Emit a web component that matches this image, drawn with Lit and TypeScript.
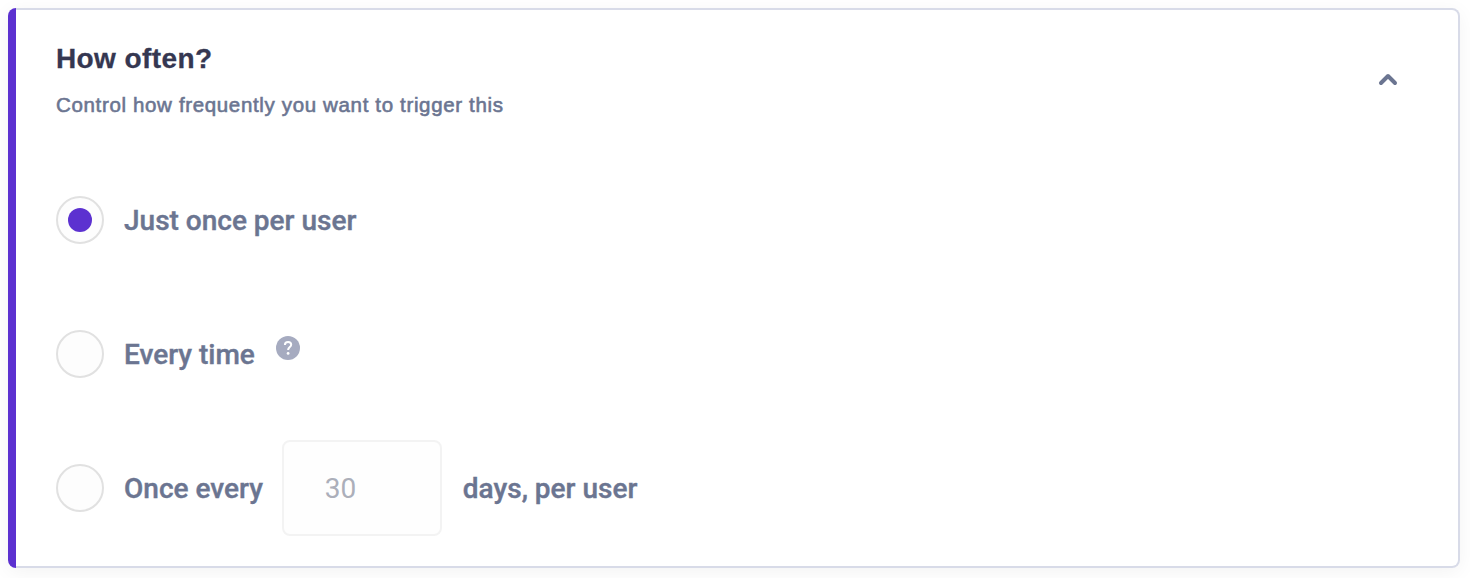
import { LitElement, html, css } from 'lit'
import { customElement, property, state } from 'lit/decorators.js'

type Frequency = 'once' | 'always' | 'interval'

@customElement('radio-option')
class RadioOption extends LitElement {
  @property({ type: Boolean, reflect: true }) checked = false
  @property() label = ''

  static styles = css`
    :host {
      display: flex;
      align-items: center;
      height: 96px;
    }
    .option {
      display: flex;
      align-items: center;
      gap: 20px;
      border: none;
      padding: 0;
      background: transparent;
      color: #6b7591;
      font: 500 28px/36px Roboto, sans-serif;
      white-space: nowrap;
      cursor: pointer;
    }
    .ring {
      box-sizing: border-box;
      display: flex;
      align-items: center;
      justify-content: center;
      width: 48px;
      height: 48px;
      border: 2px solid #e1e1e1;
      border-radius: 50%;
      background: #fdfdfd;
    }
    .dot {
      width: 24px;
      height: 24px;
      border-radius: 50%;
      background: #5c31d0;
    }
    .label {
      padding-top: 2px;
      -webkit-text-stroke: 0.4px #6b7591;
    }
  `

  render() {
    return html`
      <button class="option" role="radio" aria-checked=${this.checked}>
        <span class="ring">${this.checked ? html`<span class="dot"></span>` : ''}</span>
        <span class="label">${this.label}</span>
      </button>
      <slot></slot>
    `
  }
}

@customElement('app-root')
class AppRoot extends LitElement {
  @state() private frequency: Frequency = 'once'
  @state() private open = true

  static styles = css`
    :host {
      display: block;
      box-sizing: border-box;
      height: 578px;
      padding: 8px 10px 10px 8px;
      overflow: hidden;
      background: #fff;
    }
    .card {
      display: flex;
      height: 560px;
      border-radius: 8px;
      box-shadow: 0 4px 20px rgba(0, 0, 0, 0.05);
    }
    .accent {
      width: 8px;
      border-radius: 8px 0 0 8px;
      background: #5c31d0;
    }
    .panel {
      box-sizing: border-box;
      flex: 1;
      border: 2px solid #d8dbe8;
      border-left: none;
      border-radius: 0 8px 8px 0;
      padding: 30px 60px 0 40px;
      background: #fff;
    }
    .header {
      display: flex;
      align-items: center;
      justify-content: space-between;
      height: 80px;
    }
    .title {
      margin: 0;
      color: #353751;
      font: 700 28px/36px 'Liberation Sans', Arial, sans-serif;
      letter-spacing: 0.4px;
      -webkit-text-stroke: 0.3px #353751;
    }
    .subtitle {
      margin: 15px 0 1px;
      color: #6b7591;
      font: 400 20.5px/26px 'Liberation Sans', Arial, sans-serif;
      letter-spacing: 0.65px;
      -webkit-text-stroke: 0.6px #6b7591;
    }
    .toggle {
      display: flex;
      border: none;
      padding: 0;
      background: transparent;
      cursor: pointer;
    }
    .options {
      display: flex;
      flex-direction: column;
      gap: 38px;
      margin-top: 52px;
    }
    .help {
      margin: -12px 0 0 21px;
    }
    .days {
      box-sizing: border-box;
      width: 160px;
      height: 96px;
      margin: 0 21px 0 19px;
      border: 2px solid #f3f3f3;
      border-radius: 8px;
      padding: 0 40px 0 41px;
      background: #fefefe;
      color: #acafba;
      font: 400 28px/36px Roboto, sans-serif;
    }
    .suffix {
      padding-top: 2px;
      color: #6b7591;
      font: 500 28px/36px Roboto, sans-serif;
      -webkit-text-stroke: 0.4px #6b7591;
    }
  `

  select(frequency: Frequency) {
    this.frequency = frequency
  }

  toggle() {
    this.open = !this.open
  }

  optionsTemplate() {
    return html`
      <div class="options" role="radiogroup">
        <radio-option
          label="Just once per user"
          ?checked=${this.frequency === 'once'}
          @click=${() => this.select('once')}
        ></radio-option>
        <radio-option
          label="Every time"
          ?checked=${this.frequency === 'always'}
          @click=${() => this.select('always')}
        >
          <svg class="help" width="24" height="24" viewBox="0 0 24 24" fill="none">
            <circle cx="12" cy="12" r="12" fill="#a6abc0" />
            <path
              d="M8.9 9.1C8.9 7.1 10.2 6 12.1 6C14 6 15.2 7.1 15.2 8.8C15.2 11.1 12.1 11.2 12.1 14.1"
              stroke="#fff"
              stroke-width="2"
            />
            <circle cx="12.1" cy="17.4" r="1.4" fill="#fff" />
          </svg>
        </radio-option>
        <radio-option
          label="Once every"
          ?checked=${this.frequency === 'interval'}
          @click=${() => this.select('interval')}
        >
          <input class="days" aria-label="Days" value="30" />
          <span class="suffix">days, per user</span>
        </radio-option>
      </div>
    `
  }

  render() {
    return html`
      <section class="card">
        <div class="accent"></div>
        <div class="panel">
          <header class="header">
            <div>
              <h2 class="title">How often?</h2>
              <p class="subtitle">Control how frequently you want to trigger this</p>
            </div>
            <button class="toggle" aria-label="Toggle section" @click=${this.toggle}>
              <svg width="20" height="14" viewBox="0 0 20 14" fill="none">
                <path
                  d="M3 10L10 3L17 10"
                  stroke="#6b7591"
                  stroke-width="4"
                  stroke-linecap="round"
                  stroke-linejoin="round"
                />
              </svg>
            </button>
          </header>
          ${this.open ? this.optionsTemplate() : ''}
        </div>
      </section>
    `
  }
}

export { AppRoot, RadioOption }
